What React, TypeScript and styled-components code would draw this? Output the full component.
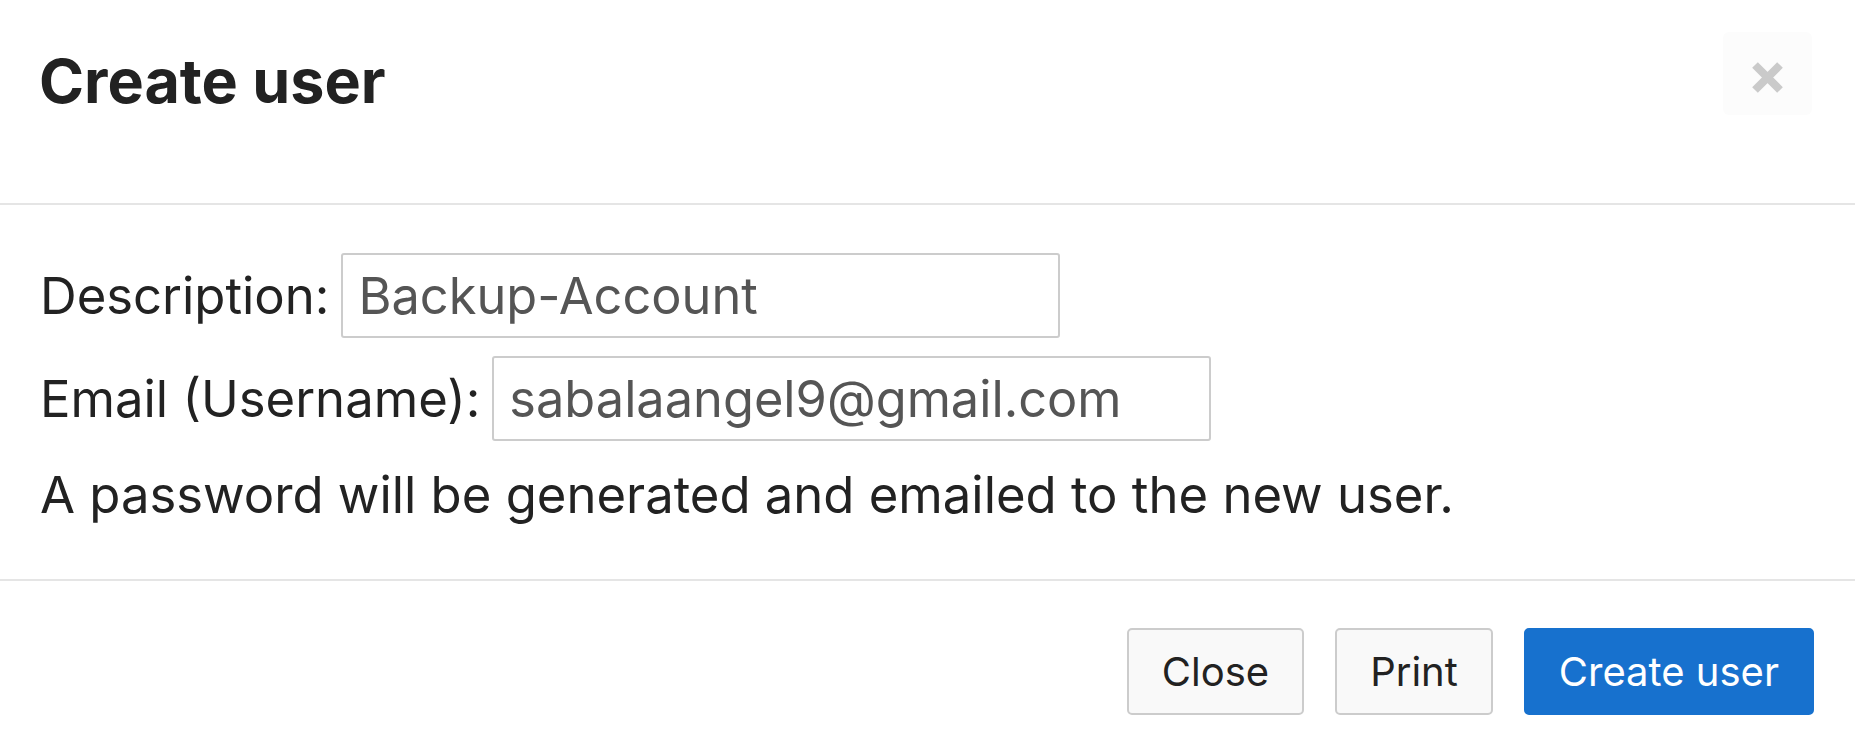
import React from 'react';
import styled, { createGlobalStyle } from 'styled-components';

const GlobalStyle = createGlobalStyle`
  html, body {
    margin: 0;
    padding: 0;
    background: #fff;
  }

  body {
    font-family: Inter, "Noto Sans", "Liberation Sans", sans-serif;
    color: #222;
  }
`

const Modal = styled.div`
  width: 1855px;
  min-height: 752px;
  background: #fff;
`

const Header = styled.header`
  display: flex;
  align-items: flex-start;
  justify-content: space-between;
  box-sizing: border-box;
  height: 205px;
  padding: 32px 43px 0 39px;
  border-bottom: 2px solid #e5e5e5;
`

const Title = styled.h4`
  margin: 16px 0 0;
  font-size: 61px;
  line-height: 1.1;
  font-weight: 700;
  color: #222;
`

const CloseX = styled.button`
  display: flex;
  align-items: center;
  justify-content: center;
  width: 89px;
  height: 83px;
  padding: 7px 0 0;
  border: none;
  border-radius: 6px;
  background: #fcfcfc;
  cursor: pointer;
`

const Body = styled.div`
  display: flex;
  flex-direction: column;
  gap: 18px;
  padding: 48px 40px 49px;
  font-size: 50.8px;
`

const Row = styled.label`
  display: flex;
  align-items: center;
  gap: 12px;
`

const Input = styled.input`
  box-sizing: border-box;
  width: 719px;
  height: 85px;
  padding: 0 15px;
  border: 2px solid #ccc;
  border-radius: 3px;
  font-family: inherit;
  font-size: 50.5px;
  color: #555;
  background: #fff;
  outline: none;
`

const Note = styled.p`
  margin: 2px 0 0;
  line-height: 1.35;
`

const Footer = styled.footer`
  display: flex;
  justify-content: flex-end;
  gap: 31px;
  padding: 47px 41px 47px;
  border-top: 2px solid #e5e5e5;
`

const Button = styled.button<{ primary?: boolean }>`
  box-sizing: border-box;
  height: 87px;
  padding: 0 33px;
  border: 2px solid ${({ primary }) => (primary ? '#1771ce' : '#ccc')};
  border-radius: 5px;
  background: ${({ primary }) => (primary ? '#1771ce' : '#f9f9f9')};
  color: ${({ primary }) => (primary ? '#fff' : '#222')};
  font-family: inherit;
  font-size: 40px;
  cursor: pointer;
`

export default function App() {
  return (
    <>
      <GlobalStyle />
      <Modal>
        <Header>
          <Title>Create user</Title>
          <CloseX aria-label="Close">
            <svg width="31" height="31" viewBox="0 0 31 31">
              <path d="M3 3 L28 28 M28 3 L3 28" stroke="#cacaca" strokeWidth="8" />
            </svg>
          </CloseX>
        </Header>
        <Body>
          <Row>
            Description:
            <Input defaultValue="Backup-Account" />
          </Row>
          <Row>
            Email (Username):
            <Input defaultValue="sabalaangel9@gmail.com" />
          </Row>
          <Note>A password will be generated and emailed to the new user.</Note>
        </Body>
        <Footer>
          <Button>Close</Button>
          <Button>Print</Button>
          <Button primary>Create user</Button>
        </Footer>
      </Modal>
    </>
  )
}
